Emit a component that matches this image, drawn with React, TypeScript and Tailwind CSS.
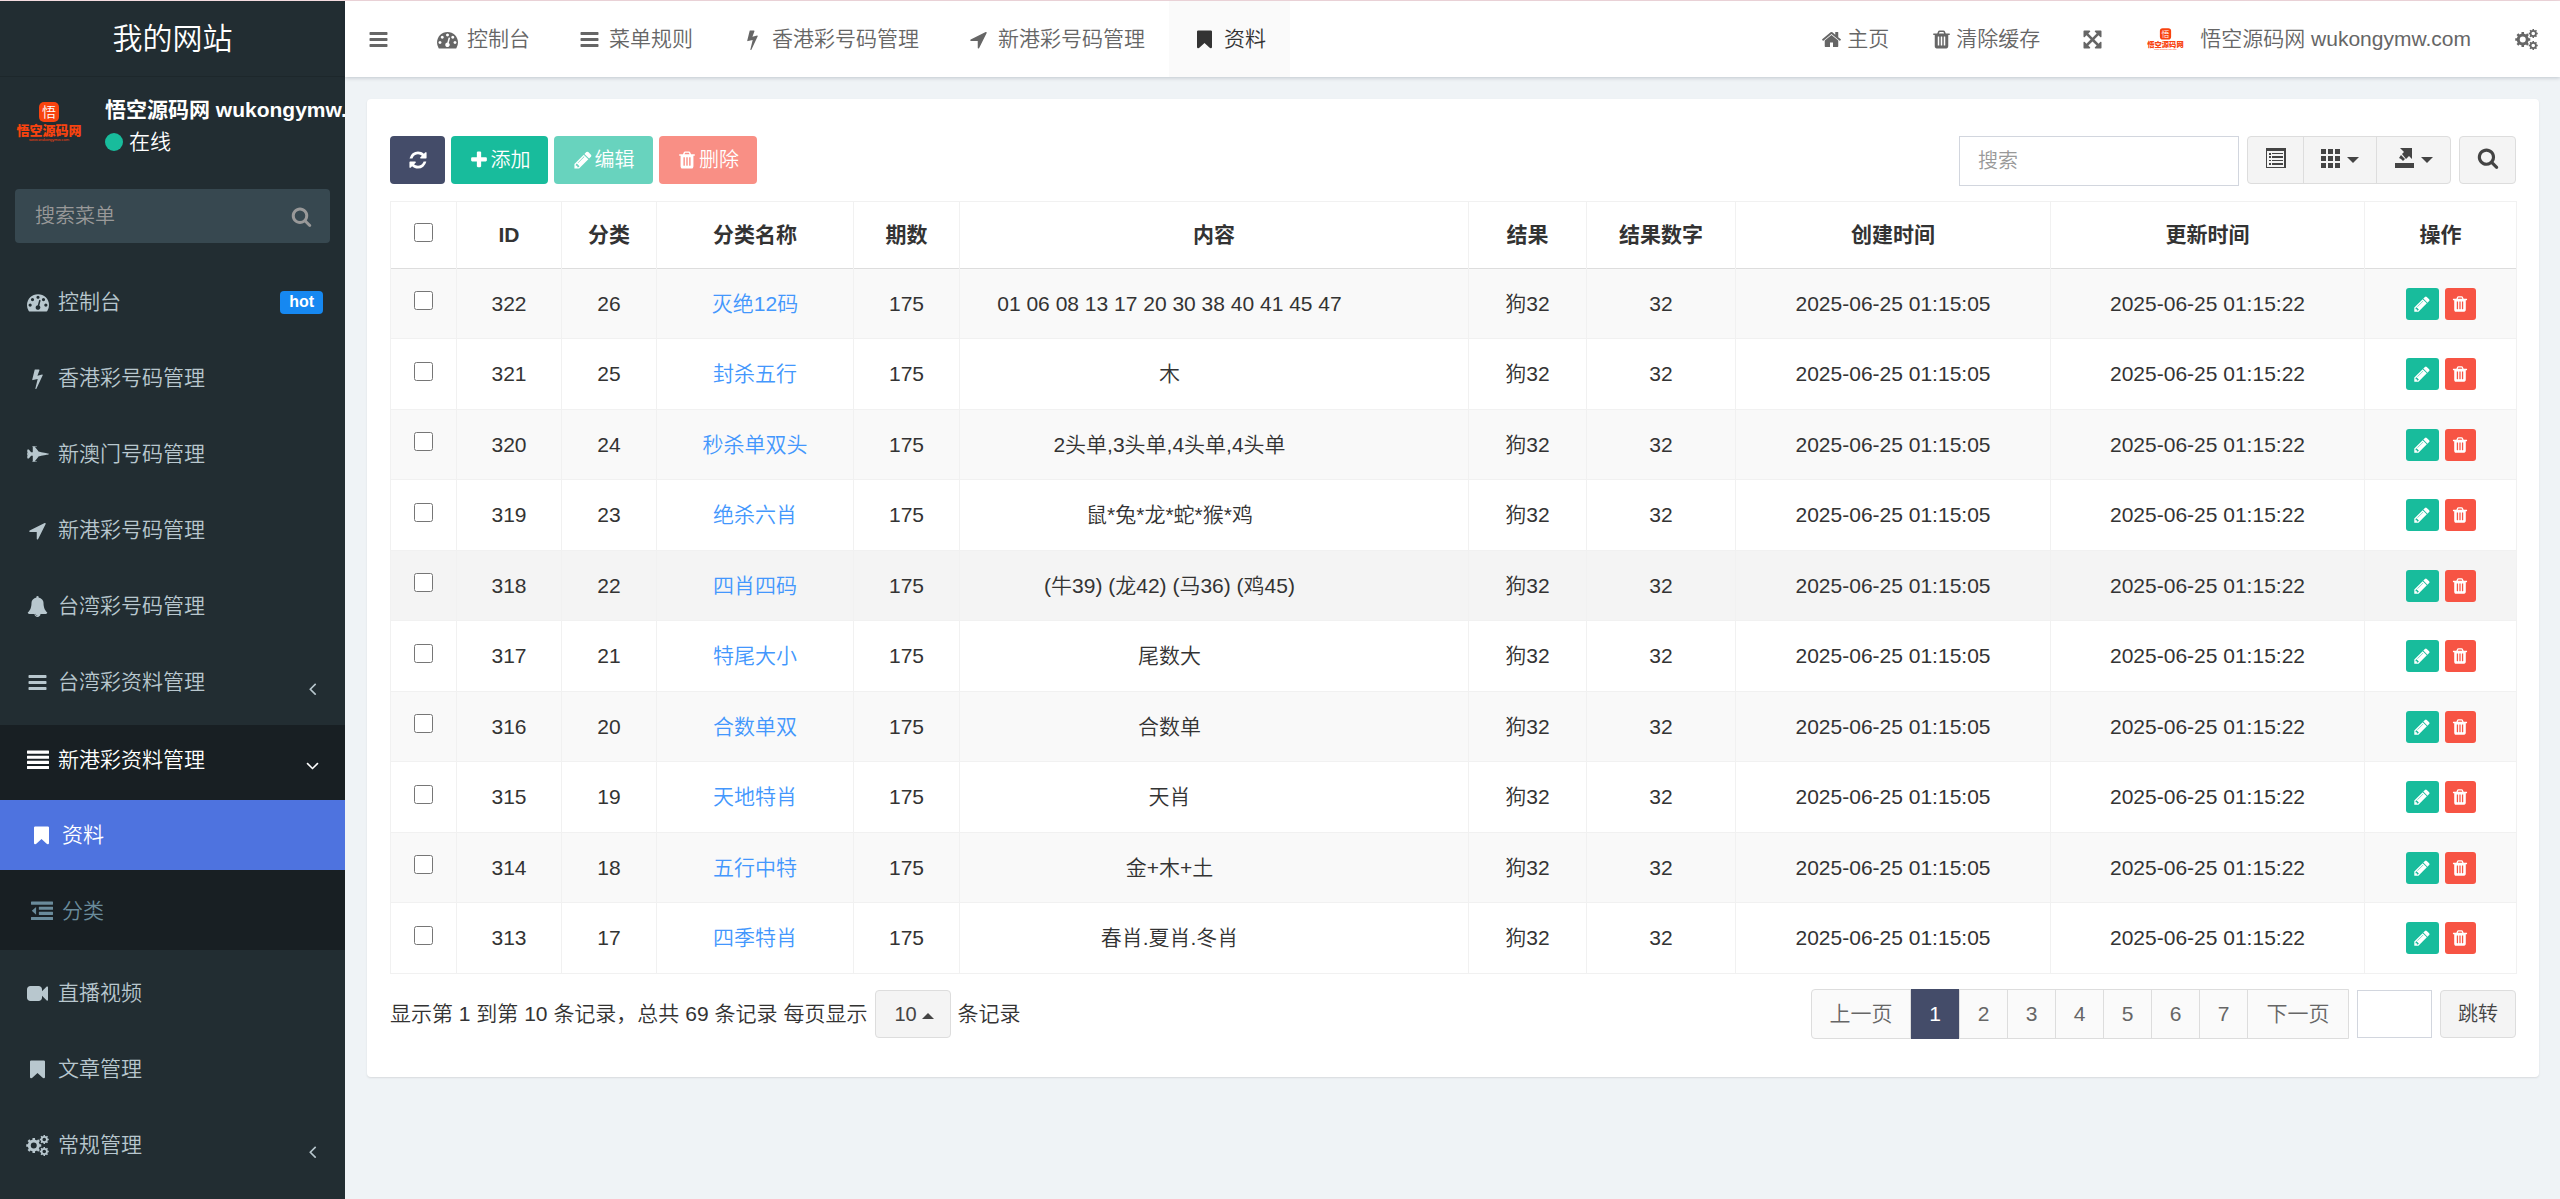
import type { ReactNode } from "react";
import { FaFighterJet } from "react-icons/fa";

// Solid 1792-unit glyphs
const paths = {
  bars: "M1664 1344v128q0 26-19 45t-45 19h-1408q-26 0-45-19t-19-45v-128q0-26 19-45t45-19h1408q26 0 45 19t19 45zm0-512v128q0 26-19 45t-45 19h-1408q-26 0-45-19t-19-45v-128q0-26 19-45t45-19h1408q26 0 45 19t19 45zm0-512v128q0 26-19 45t-45 19h-1408q-26 0-45-19t-19-45v-128q0-26 19-45t45-19h1408q26 0 45 19t19 45z",
  dashboard:
    "M384 1152q0-53-37.5-90.5t-90.5-37.5-90.5 37.5-37.5 90.5 37.5 90.5 90.5 37.5 90.5-37.5 37.5-90.5zm192-448q0-53-37.5-90.5t-90.5-37.5-90.5 37.5-37.5 90.5 37.5 90.5 90.5 37.5 90.5-37.5 37.5-90.5zm428 481l101-382q6-26-7.5-48.5t-38.5-29.5-48 6.5-30 39.5l-101 382q-60 5-107 43.5t-63 98.5q-20 77 20 146t117 89 146-20 89-117q16-60-6-117t-72-91zm660-33q0-53-37.5-90.5t-90.5-37.5-90.5 37.5-37.5 90.5 37.5 90.5 90.5 37.5 90.5-37.5 37.5-90.5zm-640-640q0-53-37.5-90.5t-90.5-37.5-90.5 37.5-37.5 90.5 37.5 90.5 90.5 37.5 90.5-37.5 37.5-90.5zm448 192q0-53-37.5-90.5t-90.5-37.5-90.5 37.5-37.5 90.5 37.5 90.5 90.5 37.5 90.5-37.5 37.5-90.5zm320 448q0 261-141 483-19 29-54 29h-1402q-35 0-54-29-141-221-141-483 0-182 71-348t191-286 286-191 348-71 348 71 286 191 191 286 71 348z",
  bolt: "M1333 566q18 20 7 44l-540 1157q-13 25-42 25-4 0-14-2-17-5-25.5-19t-4.5-30l197-808-406 101q-4 1-12 1-18 0-31-11-18-15-13-39l201-825q4-14 16-23t28-9h328q19 0 32 12.5t13 29.5q0 8-5 18l-171 463 396-98q8-2 12-2 19 0 34 15z",
  arrow:
    "M1593 349l-640 1280q-17 35-57 35-5 0-15-2-22-5-35.5-22.5t-13.5-39.5v-576h-576q-22 0-39.5-13.5t-22.5-35.5 4-42 29-30l1280-640q13-7 29-7 27 0 45 19 15 14 18.5 34.5t-6.5 39.5z",
  bookmark:
    "M1420 128q23 0 44 9 33 13 52.5 41t19.5 62v1289q0 34-19.5 62t-52.5 41q-19 8-44 8-48 0-83-32l-441-424-441 424q-36 33-83 33-23 0-44-9-33-13-52.5-41t-19.5-62v-1289q0-34 19.5-62t52.5-41q21-9 44-9h1048z",
  home: "M1472 992v480q0 26-19 45t-45 19h-384v-384h-256v384h-384q-26 0-45-19t-19-45v-480q0-1 .5-3t.5-3l575-474 575 474q1 2 1 6zm223-69l-62 74q-8 9-21 11h-3q-13 0-21-7l-692-577-692 577q-12 8-24 7-13-2-21-11l-62-74q-8-10-7-23.5t11-21.5l719-599q32-26 76-26t76 26l244 204v-195q0-14 9-23t23-9h192q14 0 23 9t9 23v408l219 182q10 8 11 21.5t-7 23.5z",
  trash:
    "M704 1376v-704q0-14-9-23t-23-9h-64q-14 0-23 9t-9 23v704q0 14 9 23t23 9h64q14 0 23-9t9-23zm256 0v-704q0-14-9-23t-23-9h-64q-14 0-23 9t-9 23v704q0 14 9 23t23 9h64q14 0 23-9t9-23zm256 0v-704q0-14-9-23t-23-9h-64q-14 0-23 9t-9 23v704q0 14 9 23t23 9h64q14 0 23-9t9-23zm-544-992h448l-48-117q-7-9-17-11h-317q-10 2-17 11zm928 32v64q0 14-9 23t-23 9h-96v948q0 83-47 143.5t-113 60.5h-832q-66 0-113-58.5t-47-141.5v-952h-96q-14 0-23-9t-9-23v-64q0-14 9-23t23-9h309l70-167q15-37 54-63t79-26h320q40 0 79 26t54 63l70 167h309q14 0 23 9t9 23z",
  plus: "M1600 736v192q0 40-28 68t-68 28h-416v416q0 40-28 68t-68 28h-192q-40 0-68-28t-28-68v-416h-416q-40 0-68-28t-28-68v-192q0-40 28-68t68-28h416v-416q0-40 28-68t68-28h192q40 0 68 28t28 68v416h416q40 0 68 28t28 68z",
  pencil:
    "M491 1536l91-91-235-235-91 91v107h128v128h107zm523-928q0-22-22-22-10 0-17 7l-542 542q-7 7-7 17 0 22 22 22 10 0 17-7l542-542q7-7 7-17zm-54-192l416 416-832 832h-416v-416zm683 96q0 53-37 90l-166 166-416-416 166-165q36-38 90-38 53 0 91 38l235 234q37 39 37 91z",
  refresh:
    "M1639 1056q0 5-1 7-64 268-268 434.5t-478 166.5q-146 0-282.5-55t-243.5-157l-129 129q-19 19-45 19t-45-19-19-45v-448q0-26 19-45t45-19h448q26 0 45 19t19 45-19 45l-137 137q71 66 161 102t187 36q134 0 250-65t186-179q11-17 53-117 8-23 30-23h192q13 0 22.5 9.5t9.5 22.5zm25-800v448q0 26-19 45t-45 19h-448q-26 0-45-19t-19-45 19-45l138-138q-148-137-349-137-134 0-250 65t-186 179q-11 17-53 117-8 23-30 23h-199q-13 0-22.5-9.5t-9.5-22.5v-7q65-268 270-434.5t480-166.5q146 0 284 55.5t245 156.5l130-129q19-19 45-19t45 19 19 45z",
  search:
    "M1216 832q0-185-131.5-316.5t-316.5-131.5-316.5 131.5-131.5 316.5 131.5 316.5 316.5 131.5 316.5-131.5 131.5-316.5zm512 832q0 52-38 90t-90 38q-54 0-90-38l-343-342q-179 124-399 124-143 0-273.5-55.5t-225-150-150-225-55.5-273.5 55.5-273.5 150-225 225-150 273.5-55.5 273.5 55.5 225 150 150 225 55.5 273.5q0 220-124 399l343 343q37 37 37 90z",
  bell: "M912 1696q0-16-16-16-59 0-101.5-42.5t-42.5-101.5q0-16-16-16t-16 16q0 73 51.5 124.5t124.5 51.5q16 0 16-16zm816-288q0 52-38 90t-90 38h-448q0 106-75 181t-181 75-181-75-75-181h-448q-52 0-90-38t-38-90q50-42 91-88t85-119.5 74.5-158.5 50-206 19.5-260q0-152 117-282.5t307-158.5q-8-19-8-39 0-40 28-68t68-28 68 28 28 68q0 20-8 39 190 28 307 158.5t117 282.5q0 139 19.5 260t50 206 74.5 158.5 85 119.5 91 88z",
  video:
    "M1792 352v1088q0 42-39 59-13 5-25 5-27 0-45-19l-403-403v166q0 119-84.5 203.5t-203.5 84.5h-704q-119 0-203.5-84.5t-84.5-203.5v-704q0-119 84.5-203.5t203.5-84.5h704q119 0 203.5 84.5t84.5 203.5v165l403-402q18-19 45-19 12 0 25 5 39 17 39 59z",
  justify:
    "M32 128h1728q32 0 32 32v192q0 32-32 32h-1728q-32 0-32-32v-192q0-32 32-32zM32 544h1728q32 0 32 32v192q0 32-32 32h-1728q-32 0-32-32v-192q0-32 32-32zM32 960h1728q32 0 32 32v192q0 32-32 32h-1728q-32 0-32-32v-192q0-32 32-32zM32 1376h1728q32 0 32 32v192q0 32-32 32h-1728q-32 0-32-32v-192q0-32 32-32z",
  outdent:
    "M32 128h1728q32 0 32 32v192q0 32-32 32h-1728q-32 0-32-32v-192q0-32 32-32zM672 544h1088q32 0 32 32v192q0 32-32 32h-1088q-32 0-32-32v-192q0-32 32-32zM672 960h1088q32 0 32 32v192q0 32-32 32h-1088q-32 0-32-32v-192q0-32 32-32zM32 1376h1728q32 0 32 32v192q0 32-32 32h-1728q-32 0-32-32v-192q0-32 32-32zM416 560v640l-352-320z",
  arrows:
    "M1411 541l-355 355 355 355 144-144q29-31 70-14 39 17 39 59v448q0 26-19 45t-45 19h-448q-42 0-59-40-17-39 14-69l144-144-355-355-355 355 144 144q31 30 14 69-17 40-59 40h-448q-26 0-45-19t-19-45v-448q0-42 40-59 39-17 69 14l144 144 355-355-355-355-144 144q-19 19-45 19-12 0-24-5-40-17-40-59v-448q0-26 19-45t45-19h448q42 0 59 40 17 39-14 69l-144 144 355 355 355-355-144-144q-31-30-14-69 17-40 59-40h448q26 0 45 19t19 45v448q0 42-39 59-13 5-25 5-26 0-45-19z",
  angleLeft:
    "M1203 544q0 13-10 23l-393 393 393 393q10 10 10 23t-10 23l-50 50q-10 10-23 10t-23-10l-466-466q-10-10-10-23t10-23l466-466q10-10 23-10t23 10l50 50q10 10 10 23z",
  angleDown:
    "M1395 736q0 13-10 23l-466 466q-10 10-23 10t-23-10l-466-466q-10-10-10-23t10-23l50-50q10-10 23-10t23 10l393 393 393-393q10-10 23-10t23 10l50 50q10 10 10 23z",
};

type IconName = keyof typeof paths;

const Icon = ({ name, className = "size-[21px]" }: { name: IconName; className?: string }) => (
  <svg viewBox="0 0 1792 1792" fill="currentColor" aria-hidden="true" className={`shrink-0 ${className}`}>
    <path d={paths[name]} />
  </svg>
);

const Gear = ({ cx, cy, r }: { cx: number; cy: number; r: number }) => (
  <g transform={`translate(${cx} ${cy})`}>
    <circle r={r * 0.6} fill="none" stroke="currentColor" strokeWidth={r * 0.4} />
    {[0, 45, 90, 135, 180, 225, 270, 315].map((angle) => (
      <rect
        key={angle}
        x={-r * 0.17}
        y={-r}
        width={r * 0.34}
        height={r * 0.35}
        fill="currentColor"
        transform={`rotate(${angle})`}
      />
    ))}
  </g>
);

const Cogs = () => (
  <svg viewBox="0 0 1920 1792" aria-hidden="true" className="h-[21px] w-[23px] shrink-0">
    <Gear cx={640} cy={896} r={640} />
    <Gear cx={1536} cy={384} r={384} />
    <Gear cx={1536} cy={1408} r={384} />
  </svg>
);

const Logo = ({ className }: { className: string }) => (
  <svg viewBox="0 0 66 66" className={`shrink-0 ${className}`} role="img" aria-label="悟空源码网">
    <rect x="23" y="13" width="20" height="20" rx="5" fill="#f8430f" />
    <text x="33" y="28" textAnchor="middle" fontSize="14" fill="#fff">
      悟
    </text>
    <text x="33" y="46" textAnchor="middle" fontSize="13" fontWeight="900" fill="#f8430f">
      悟空源码网
    </text>
    <text x="33" y="52" textAnchor="middle" fontSize="4" fill="#f8430f">
      www.wukongymw.com
    </text>
  </svg>
);

const Caret = ({ up = false }: { up?: boolean }) => (
  <svg viewBox="0 0 12 6" fill="currentColor" aria-hidden="true" className="mt-1 h-[6px] w-[12px] shrink-0">
    <path d={up ? "M0 6L6 0L12 6Z" : "M0 0H12L6 6Z"} />
  </svg>
);

const menuTop: { icon: ReactNode; label: string; badge?: string; arrow?: boolean }[] = [
  { icon: <Icon name="dashboard" className="size-[22px]" />, label: "控制台", badge: "hot" },
  { icon: <Icon name="bolt" />, label: "香港彩号码管理" },
  { icon: <FaFighterJet className="size-[22px]" />, label: "新澳门号码管理" },
  { icon: <Icon name="arrow" />, label: "新港彩号码管理" },
  { icon: <Icon name="bell" />, label: "台湾彩号码管理" },
  { icon: <Icon name="bars" />, label: "台湾彩资料管理", arrow: true },
];

const menuBottom: typeof menuTop = [
  { icon: <Icon name="video" />, label: "直播视频" },
  { icon: <Icon name="bookmark" />, label: "文章管理" },
  { icon: <Cogs />, label: "常规管理", arrow: true },
];

const tabs: { icon: IconName; label: string; active?: boolean }[] = [
  { icon: "dashboard", label: "控制台" },
  { icon: "bars", label: "菜单规则" },
  { icon: "bolt", label: "香港彩号码管理" },
  { icon: "arrow", label: "新港彩号码管理" },
  { icon: "bookmark", label: "资料", active: true },
];

const columns = [
  { title: "ID", width: "w-[105px]" },
  { title: "分类", width: "w-[95px]" },
  { title: "分类名称", width: "w-[197px]" },
  { title: "期数", width: "w-[106px]" },
  { title: "内容", width: "w-[509px]" },
  { title: "结果", width: "w-[118px]" },
  { title: "结果数字", width: "w-[149px]" },
  { title: "创建时间", width: "w-[315px]" },
  { title: "更新时间", width: "w-[314px]" },
  { title: "操作", width: "w-[152px]" },
];

const rows = [
  { id: 322, cate: 26, name: "灭绝12码", content: "01 06 08 13 17 20 30 38 40 41 45 47" },
  { id: 321, cate: 25, name: "封杀五行", content: "木" },
  { id: 320, cate: 24, name: "秒杀单双头", content: "2头单,3头单,4头单,4头单" },
  { id: 319, cate: 23, name: "绝杀六肖", content: "鼠*兔*龙*蛇*猴*鸡" },
  { id: 318, cate: 22, name: "四肖四码", content: "(牛39) (龙42) (马36) (鸡45)", hover: true },
  { id: 317, cate: 21, name: "特尾大小", content: "尾数大" },
  { id: 316, cate: 20, name: "合数单双", content: "合数单" },
  { id: 315, cate: 19, name: "天地特肖", content: "天肖" },
  { id: 314, cate: 18, name: "五行中特", content: "金+木+土" },
  { id: 313, cate: 17, name: "四季特肖", content: "春肖.夏肖.冬肖" },
];

const MenuItem = ({ icon, label, badge, arrow }: (typeof menuTop)[number]) => (
  <li>
    <a href="#" className="flex h-[70px] items-center pr-[22px] pl-6 hover:text-white">
      <span className="mr-[7px] flex w-[27px] justify-center">{icon}</span>
      <span className="flex-1">{label}</span>
      {badge && (
        <span className="flex h-[23px] items-center rounded-[4px] bg-[#1688f1] px-[9px] text-base font-bold text-white">
          {badge}
        </span>
      )}
      {arrow && <Icon name="angleLeft" className="mt-3 size-[21px]" />}
    </a>
  </li>
);

const Sidebar = () => (
  <aside className="w-[345px] shrink-0 overflow-hidden bg-[#222d32] text-[#b8c7ce]">
    <a href="#" className="flex h-[76px] items-center justify-center border-b border-[#1d272b] text-[30px] text-white">
      我的网站
    </a>
    <div className="flex h-[98px] items-center pl-4 text-white">
      <Logo className="-mt-2 size-[66px]" />
      <div className="ml-[23px] whitespace-nowrap">
        <p className="leading-8 font-bold">悟空源码网 wukongymw.com</p>
        <p className="flex items-center gap-[6px] leading-8">
          <span className="size-[18px] rounded-full bg-[#18bc9c]" />
          在线
        </p>
      </div>
    </div>
    <form className="mx-[15px] mt-[14px] mb-6 flex h-[54px] items-center rounded-[4px] bg-[#374850] pr-[18px] pl-5">
      <input
        type="text"
        aria-label="搜索菜单"
        placeholder="搜索菜单"
        className="h-full min-w-0 flex-1 bg-transparent text-xl outline-none placeholder:text-[#999]"
      />
      <button type="button" aria-label="搜索" className="text-[#999]">
        <Icon name="search" className="size-[21px]" />
      </button>
    </form>
    <nav>
      <ul className="flex flex-col gap-[6px]">
        {menuTop.map((item) => (
          <MenuItem key={item.label} {...item} />
        ))}
      </ul>
      {/* Expanded group */}
      <div className="my-2 bg-[#181f23] pb-1">
        <a href="#" className="flex h-[75px] items-center pr-[22px] pb-[6px] pl-6 text-white">
          <span className="mr-[7px] flex w-[27px] justify-center">
            <Icon name="justify" className="size-[22px]" />
          </span>
          <span className="flex-1">新港彩资料管理</span>
          <Icon name="angleDown" className="mt-3 size-[21px]" />
        </a>
        <ul className="flex flex-col gap-[6px]">
          <li>
            <a href="#" className="flex h-[70px] items-center bg-[#4e73df] pl-7 text-white">
              <span className="mr-[7px] flex w-[27px] justify-center">
                <Icon name="bookmark" />
              </span>
              资料
            </a>
          </li>
          <li>
            <a href="#" className="flex h-[70px] items-center pl-7 text-[#6a8b9b]">
              <span className="mr-[7px] flex w-[27px] justify-center">
                <Icon name="outdent" className="size-[22px]" />
              </span>
              分类
            </a>
          </li>
        </ul>
      </div>
      <ul className="flex flex-col gap-[6px]">
        {menuBottom.map((item) => (
          <MenuItem key={item.label} {...item} />
        ))}
      </ul>
    </nav>
  </aside>
);

const Header = () => (
  <header className="relative flex h-[76px] items-stretch bg-white text-[#666] shadow-[0_1px_4px_rgba(0,21,41,0.2)]">
    <button type="button" aria-label="切换菜单" className="flex w-[67px] items-center justify-center">
      <Icon name="bars" />
    </button>
    <nav className="flex whitespace-nowrap">
      {tabs.map((tab) => (
        <a
          key={tab.label}
          href="#"
          className={`flex items-center pr-6 pl-[22px] ${tab.active ? "bg-[#fafafa] text-[#333]" : ""}`}
        >
          <span className="mr-[6px] flex w-[27px] justify-center">
            <Icon name={tab.icon} />
          </span>
          {tab.label}
        </a>
      ))}
    </nav>
    <nav className="ml-auto flex whitespace-nowrap">
      <a href="#" className="flex items-center gap-[5px] px-[22px]">
        <Icon name="home" />
        主页
      </a>
      <a href="#" className="flex items-center gap-1 px-5">
        <Icon name="trash" />
        清除缓存
      </a>
      <button type="button" aria-label="全屏" className="flex items-center px-[22px]">
        <Icon name="arrows" />
      </button>
      <a href="#" className="flex items-center gap-4 px-[22px]">
        <Logo className="size-[37px]" />
        悟空源码网 wukongymw.com
      </a>
      <button type="button" aria-label="设置" className="flex items-center px-[22px]">
        <Cogs />
      </button>
    </nav>
  </header>
);

const Toolbar = () => (
  <div className="flex items-start justify-between text-xl">
    <div className="flex gap-[6px] text-white">
      <button type="button" aria-label="刷新" className="flex h-12 w-[55px] items-center justify-center rounded-[4px] bg-[#444c69]">
        <Icon name="refresh" className="size-5" />
      </button>
      <button type="button" className="flex h-12 w-[97px] items-center justify-center gap-[2px] rounded-[4px] bg-[#18bc9c]">
        <Icon name="plus" className="size-5" />
        添加
      </button>
      <button type="button" disabled className="flex h-12 w-[99px] items-center justify-center gap-[2px] rounded-[4px] bg-[#18bc9c] opacity-65">
        <Icon name="pencil" className="size-5" />
        编辑
      </button>
      <button type="button" disabled className="flex h-12 w-[98px] items-center justify-center gap-[2px] rounded-[4px] bg-[#f75444] opacity-65">
        <Icon name="trash" className="size-5" />
        删除
      </button>
    </div>
    <div className="flex gap-2 text-[#444]">
      <input
        type="text"
        aria-label="搜索"
        placeholder="搜索"
        className="h-[50px] w-[280px] border border-[#d2d6de] px-[18px] outline-none placeholder:text-[#999]"
      />
      <div className="flex h-12 divide-x divide-[#ddd] rounded-[4px] border border-[#ddd] bg-[#f4f4f4]">
        <button type="button" aria-label="切换视图" className="flex w-14 items-center justify-center pb-1">
          <svg viewBox="0 0 20 20" className="size-5" fill="currentColor" aria-hidden="true">
            <path fillRule="evenodd" d="M0 0H20V20H0ZM1 3V19H18V3Z" />
            <path d="M3 5h2v2h-2zM6 5h11v1h-11zM3 8h2v2h-2zM6 8h11v2h-11zM3 12h2v1h-2zM6 12h11v1h-11zM3 15h2v2h-2zM6 15h11v2h-11z" />
          </svg>
        </button>
        <button type="button" aria-label="列" className="flex w-[73px] items-center justify-center gap-[6px] pb-1">
          <svg viewBox="0 0 20 20" className="size-5" fill="currentColor" aria-hidden="true">
            <path d="M0 1h5v5h-5zM7 1h5v5h-5zM14 1h5v5h-5zM0 8h5v5h-5zM7 8h5v5h-5zM14 8h5v5h-5zM0 15h5v5h-5zM7 15h5v5h-5zM14 15h5v5h-5z" />
          </svg>
          <Caret />
        </button>
        <button type="button" aria-label="导出" className="flex w-[73px] items-center justify-center gap-[6px] pb-1">
          <svg viewBox="0 0 20 20" className="size-5" fill="currentColor" aria-hidden="true">
            <path d="M0 15H19V20H0ZM5 0H17V11L14 8L11 11L7 6L9 4ZM6 7L10 11L8 13L6 11L4 10Z" />
          </svg>
          <Caret />
        </button>
      </div>
      <button type="button" aria-label="搜索" className="flex h-12 w-[57px] items-center justify-center rounded-[4px] border border-[#ddd] bg-[#f4f4f4] pb-1">
        <Icon name="search" className="size-[22px]" />
      </button>
    </div>
  </div>
);

const DataTable = () => (
  <table className="mt-[15px] w-full table-fixed border-collapse border border-[#f1f1f1] text-center">
    <thead>
      <tr className="h-[67px] border-b border-[#ddd]">
        <th className="w-[66px] border-r border-[#f1f1f1] pb-2 align-middle">
          <input type="checkbox" aria-label="全选" className="size-[19px] align-middle" />
        </th>
        {columns.map((col) => (
          <th key={col.title} className={`border-r border-[#f1f1f1] font-bold ${col.width}`}>
            {col.title}
          </th>
        ))}
      </tr>
    </thead>
    <tbody className="[&_td]:border-x [&_td]:border-b [&_td]:border-[#f1f1f1]">
      {rows.map((row) => (
        <tr key={row.id} className={`odd:h-[70px] even:h-[71px] ${row.hover ? "bg-[#f4f4f4]" : "odd:bg-[#f9f9f9]"}`}>
          <td className="pb-2">
            <input type="checkbox" aria-label={`选择 ${row.id}`} className="size-[19px] align-middle" />
          </td>
          <td>{row.id}</td>
          <td>{row.cate}</td>
          <td>
            <a href="#" className="text-[#4397fd]">
              {row.name}
            </a>
          </td>
          <td>175</td>
          <td className="pl-[22px]">
            <div className="w-[375px] truncate">{row.content}</div>
          </td>
          <td>狗32</td>
          <td>32</td>
          <td>2025-06-25 01:15:05</td>
          <td>2025-06-25 01:15:22</td>
          <td>
            <div className="flex justify-center gap-[6px] text-white">
              <button type="button" aria-label="编辑" className="flex h-8 w-[33px] items-center justify-center rounded-[3px] bg-[#18bc9c]">
                <Icon name="pencil" className="size-[18px]" />
              </button>
              <button type="button" aria-label="删除" className="flex h-8 w-[31px] items-center justify-center rounded-[3px] bg-[#f75444]">
                <Icon name="trash" className="size-[18px]" />
              </button>
            </div>
          </td>
        </tr>
      ))}
    </tbody>
  </table>
);

const Pagination = () => (
  <div className="mt-[15px] flex items-center justify-between">
    <div className="flex items-center">
      <span>显示第 1 到第 10 条记录，总共 69 条记录</span>
      <label htmlFor="page-size" className="ml-[6px]">
        每页显示
      </label>
      <div className="relative mr-[6px] ml-2">
        <select
          id="page-size"
          defaultValue="10"
          className="h-12 w-[76px] appearance-none rounded-[4px] border border-[#ddd] bg-[#f4f4f4] pl-[18px] text-xl text-[#444]"
        >
          <option>10</option>
          <option>25</option>
          <option>50</option>
        </select>
        <span className="pointer-events-none absolute inset-y-0 right-[17px] flex items-center text-[#444]">
          <Caret up />
        </span>
      </div>
      <span>条记录</span>
    </div>
    <div className="flex items-center gap-2">
      <nav className="flex h-[50px] divide-x divide-[#ddd] rounded-l-[4px] border border-[#ddd] bg-[#fafafa] text-[#666]">
        <a href="#" className="flex w-[99px] items-center justify-center">
          上一页
        </a>
        <a href="#" aria-current="page" className="-my-px flex w-[49px] items-center justify-center bg-[#444c69] text-white">
          1
        </a>
        {[2, 3, 4, 5, 6, 7].map((page) => (
          <a key={page} href="#" className="flex w-12 items-center justify-center">
            {page}
          </a>
        ))}
        <a href="#" className="flex w-[100px] items-center justify-center">
          下一页
        </a>
      </nav>
      <input type="text" aria-label="页码" className="h-12 w-[75px] border border-[#d2d6de] px-2 text-center outline-none" />
      <button type="button" className="h-12 w-[76px] rounded-[4px] border border-[#ddd] bg-[#f4f4f4] text-xl text-[#444]">
        跳转
      </button>
    </div>
  </div>
);

const App = () => {
  return (
    <div className="flex min-h-screen flex-col bg-[#eff3f6] font-['Liberation_Sans','Noto_Sans_CJK_SC',sans-serif] text-[21px] leading-[30px] font-[350] text-[#333]">
      <div className="h-px bg-[#f5dce0]" />
      <div className="flex flex-1">
        <Sidebar />
        <div className="min-w-0 flex-1">
          <Header />
          <main className="py-[22px] pr-[21px] pl-[22px]">
            <section className="rounded-[4px] bg-white px-[23px] pt-[37px] pb-[38px] shadow-[0_1px_2px_rgba(0,0,0,0.1)]">
              <Toolbar />
              <DataTable />
              <Pagination />
            </section>
          </main>
        </div>
      </div>
    </div>
  );
};

export default App;
